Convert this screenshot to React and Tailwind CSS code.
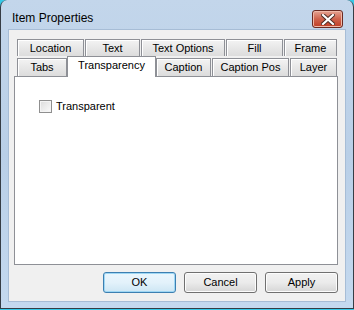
import React from "react";

const font = { fontFamily: '"Liberation Sans", Arial, sans-serif' };

function Tab({ w, label, ml = "" }) {
  return (
    <div
      className={`h-full flex items-center justify-center border border-[#8e9096] border-b-0 bg-gradient-to-b from-[#f3f3f3] to-[#dcdcdc] text-[11px] text-black leading-none shadow-[inset_1px_1px_0_#ffffff] ${ml}`}
      style={{ width: w }}
    >
      {label}
    </div>
  );
}

function Btn({ label, def }) {
  return (
    <div
      className={`w-[73px] h-[21px] rounded-[3px] flex items-center justify-center text-[11px] text-black ${
        def
          ? "border border-[#3c7fb1] bg-gradient-to-b from-[#eaf6fd] via-[#e3f2fb] to-[#cde6f4] shadow-[inset_0_0_0_1px_#9fd7f4]"
          : "border border-[#707070] bg-gradient-to-b from-[#f2f2f2] via-[#ebebeb] to-[#d6d6d6] shadow-[inset_0_0_0_1px_#fcfcfc]"
      }`}
    >
      {label}
    </div>
  );
}

export default function App() {
  return (
    <div className="w-[354px] h-[310px] bg-[#35c9e8]" style={font}>
      <div className="w-[354px] h-[309px] rounded-t-[7px] border border-t-0 border-[#363d45] bg-gradient-to-b from-[#c3d6eb] via-[#b9cfe7] to-[#c4d9ef] flex flex-col">
        {/* title bar */}
        <div className="h-[29px] flex items-start justify-between pl-[11px] pr-[10px]">
          <div className="mt-[12px] text-[12px] text-black leading-none">
            Item Properties
          </div>
          <div className="mt-[10px] w-[31px] h-[18px] rounded-[3px] border border-[#6b2a22] bg-gradient-to-b from-[#e4a393] via-[#cf624c] to-[#bf3c24] shadow-[inset_0_0_0_1px_#efb8a8] flex items-center justify-center">
            <svg width="14" height="11" viewBox="0 0 14 11">
              <path
                d="M2 1 L12 10 M12 1 L2 10"
                stroke="#4a2a24"
                strokeWidth="4"
                strokeLinecap="square"
              />
              <path
                d="M2 1 L12 10 M12 1 L2 10"
                stroke="#ffffff"
                strokeWidth="2.2"
                strokeLinecap="square"
              />
            </svg>
          </div>
        </div>
        {/* client */}
        <div className="mx-[7px] h-[273px] bg-[#f0f0f0] border border-[#a7bdd6] flex flex-col">
          <div className="pt-[9px] pl-[7px] flex flex-col">
            <div className="h-[17px] flex gap-[1px] pl-[1px]">
              <Tab w={67} label="Location" />
              <Tab w={55} label="Text" />
              <Tab w={84} label="Text Options" />
              <Tab w={57} label="Fill" />
              <Tab w={53} label="Frame" />
            </div>
            <div className="h-[20px] flex items-end pl-[1px]">
              <div className="h-[18px] flex">
                <Tab w={50} label="Tabs" />
              </div>
              <div className="relative z-10 w-[89px] h-[21px] mb-[-1px] bg-white border border-[#8e9096] border-b-0 flex justify-center pt-[3px] text-[11px] leading-none text-black">
                Transparency
              </div>
              <div className="h-[18px] flex gap-[1px]">
                <Tab w={55} label="Caption" />
                <Tab w={77} label="Caption Pos" />
                <Tab w={47} label="Layer" />
              </div>
            </div>
            <div className="w-[324px] h-[189px] -ml-[2px] bg-white border border-[#8e9096] pt-[23px] pl-[24px]">
              <div className="flex items-center gap-[4px]">
                <div className="w-[13px] h-[13px] border border-[#8f8f8f] bg-gradient-to-br from-[#dcdcdc] to-[#fbfbfb] shadow-[inset_0_0_0_1px_#f4f4f4]" />
                <span className="text-[11px] leading-none text-black">Transparent</span>
              </div>
            </div>
          </div>
          <div className="flex justify-end gap-[8px] pr-[7px] mt-[7px]">
            <Btn label="OK" def />
            <Btn label="Cancel" />
            <Btn label="Apply" />
          </div>
        </div>
      </div>
    </div>
  );
}
